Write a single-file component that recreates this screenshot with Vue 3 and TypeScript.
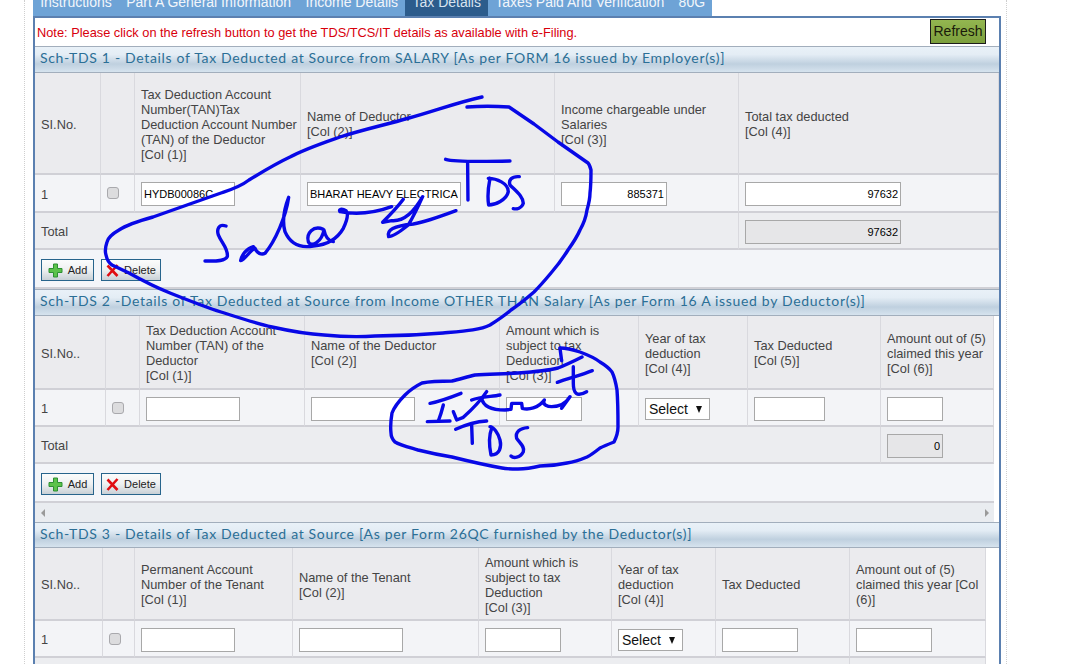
<script setup lang="ts">
interface Field { w: number; value?: string; right?: boolean; select?: boolean }
interface Section {
  title: string
  cols: number[]
  width: number
  headH: number
  rowH: number
  totalH: number
  actionH: number
  heads: string[]
  fields: Field[]
  total: string
  totalW: number
  scroll: boolean
  actions: boolean
}

const tabs = [
  { label: 'Instructions' },
  { label: 'Part A General Information' },
  { label: 'Income Details' },
  { label: 'Tax Details', active: true },
  { label: 'Taxes Paid And Verification' },
  { label: '80G' },
]

const sections: Section[] = [
  {
    title: 'Sch-TDS 1 - Details of Tax Deducted at Source from SALARY [As per FORM 16 issued by Employer(s)]',
    cols: [66, 34, 166, 254, 184, 260],
    width: 964,
    headH: 102,
    rowH: 38,
    totalH: 37,
    actionH: 39,
    heads: [
      'SI.No.',
      '',
      'Tax Deduction Account Number(TAN)Tax Deduction Account Number (TAN) of the Deductor\n[Col (1)]',
      'Name of Deductor\n[Col (2)]',
      'Income chargeable under Salaries\n[Col (3)]',
      'Total tax deducted\n[Col (4)]',
    ],
    fields: [
      { w: 94, value: 'HYDB00086C' },
      { w: 154, value: 'BHARAT HEAVY ELECTRICALS' },
      { w: 106, value: '885371', right: true },
      { w: 156, value: '97632', right: true },
    ],
    total: '97632',
    totalW: 156,
    scroll: false,
    actions: true,
  },
  {
    title: 'Sch-TDS 2 -Details of Tax Deducted at Source from Income OTHER THAN Salary [As per Form 16 A issued by Deductor(s)]',
    cols: [71, 34, 165, 195, 139, 109, 133, 113],
    width: 959,
    headH: 74,
    rowH: 37,
    totalH: 37,
    actionH: 39,
    heads: [
      'SI.No..',
      '',
      'Tax Deduction Account Number (TAN) of the Deductor\n[Col (1)]',
      'Name of the Deductor\n[Col (2)]',
      'Amount which is subject to tax Deduction\n[Col (3)]',
      'Year of tax deduction\n[Col (4)]',
      'Tax Deducted\n[Col (5)]',
      'Amount out of (5) claimed this year\n[Col (6)]',
    ],
    fields: [
      { w: 94 },
      { w: 104 },
      { w: 76 },
      { w: 65, select: true },
      { w: 71 },
      { w: 56 },
    ],
    total: '0',
    totalW: 56,
    scroll: true,
    actions: true,
  },
  {
    title: 'Sch-TDS 3 - Details of Tax Deducted at Source [As per Form 26QC furnished by the Deductor(s)]',
    cols: [68, 32, 158, 186, 133, 104, 134, 136],
    width: 951,
    headH: 73,
    rowH: 37,
    totalH: 37,
    actionH: 39,
    heads: [
      'SI.No..',
      '',
      'Permanent Account Number of the Tenant\n[Col (1)]',
      'Name of the Tenant\n[Col (2)]',
      'Amount which is subject to tax Deduction\n[Col (3)]',
      'Year of tax deduction\n[Col (4)]',
      'Tax Deducted',
      'Amount out of (5) claimed this year [Col (6)]',
    ],
    fields: [
      { w: 94 },
      { w: 104 },
      { w: 76 },
      { w: 65, select: true },
      { w: 76 },
      { w: 76 },
    ],
    total: '0',
    totalW: 76,
    scroll: false,
    actions: false,
  },
]
</script>

<template>
  <div class="page">
    <div class="rail">
      <div class="shell">
        <nav class="tabs">
          <span v-for="t in tabs" :key="t.label" class="tab" :class="{ active: t.active }">{{ t.label }}</span>
        </nav>
        <div class="frame">
          <div class="note">
            <span>Note: Please click on the refresh button to get the TDS/TCS/IT details as available with e-Filing.</span>
            <button class="refresh" type="button">Refresh</button>
          </div>

          <section v-for="s in sections" :key="s.title">
            <h2 class="sch">{{ s.title }}</h2>
            <div class="block" :style="{ width: s.width + 'px' }">
              <table class="grid" :style="{ width: s.width + 'px' }">
                <colgroup>
                  <col v-for="(c, i) in s.cols" :key="i" :style="{ width: c + 'px' }" />
                </colgroup>
                <tbody>
                  <tr class="head" :style="{ height: s.headH + 'px' }">
                    <th v-for="(h, i) in s.heads" :key="i">{{ h }}</th>
                  </tr>
                  <tr class="row" :style="{ height: s.rowH + 'px' }">
                    <td>1</td>
                    <td><input class="check" type="checkbox" /></td>
                    <td v-for="(f, i) in s.fields" :key="i">
                      <div v-if="f.select" class="sel" :style="{ width: f.w + 'px' }">
                        <select><option>Select</option></select>
                        <i class="arrow"></i>
                      </div>
                      <input
                        v-else
                        class="field"
                        :class="{ right: f.right }"
                        :style="{ width: f.w + 'px' }"
                        :value="f.value ?? ''"
                        readonly
                      />
                    </td>
                  </tr>
                  <tr class="sum" :style="{ height: s.totalH + 'px' }">
                    <td :colspan="s.cols.length - 1">Total</td>
                    <td>
                      <input class="field right off" :style="{ width: s.totalW + 'px' }" :value="s.total" readonly />
                    </td>
                  </tr>
                </tbody>
              </table>
              <div v-if="s.actions" class="actions" :style="{ height: s.actionH + 'px' }">
                <button class="act add" type="button">
                  <svg width="15" height="15" viewBox="0 0 15 15">
                    <path d="M5.500 1h4v4.500h4.500v4H9.500V14h-4V9.500H1v-4h4.500z" fill="#5cc24a" stroke="#2c8f33" />
                  </svg>
                  Add
                </button>
                <button class="act del" type="button">
                  <svg width="13" height="13" viewBox="0 0 13 13">
                    <path d="M1.500 1.500 11.500 12M11.500 1 1.500 12" stroke="#e00d12" stroke-width="2.600" fill="none" />
                  </svg>
                  Delete
                </button>
              </div>
              <div v-if="s.scroll" class="scrollbar">
                <i class="tri left"></i>
                <i class="tri right"></i>
              </div>
            </div>
          </section>
        </div>
      </div>
    </div>

    <svg class="ink" viewBox="0 0 1068 664" width="1068" height="664" fill="none">
      <g stroke="#0808e6" stroke-width="3.400" stroke-linecap="round" stroke-linejoin="round">
        <path d="M482 97 C455 103 435 111 409 118 C385 125 365 129 340 137 C320 144 305 149 290 157 C275 164 262 172 249 180 C240 187 230 190 221 193 L187 205 L153 217 C135 222 125 226 119 230 C112 234 108 238 107 242 C105 248 105 252 106 255 C107 260 109 263 112 265 L129 273 C145 282 155 287 170 293 C190 301 205 307 221 312 C240 318 255 323 272 327 C290 331 305 334 324 335 C345 337 360 337 375 336 C400 336 420 335 443 333 C465 331 480 330 490 325 C498 320 504 316 511 310 C520 304 527 298 534 292 C541 285 546 279 551 273 C558 265 563 258 568 250 C573 243 577 237 580 230 C584 223 586 217 587 210 C589 203 590 198 590 193 C591 185 591 176 591 170 C590 166 589 164 588 163 L558 142 L534 124 L509 107 C495 106 480 106 467 107" />
        <g transform="translate(200 150) scale(.3333)">
          <path vector-effect="non-scaling-stroke" d="M78 228 C55 220 50 240 55 255 C65 280 85 295 82 320 C75 335 45 333 15 333" />
          <path vector-effect="non-scaling-stroke" d="M160 290 C140 295 125 315 122 332 C135 330 150 300 165 295 C170 310 185 315 195 310 C225 275 258 200 266 142 C255 170 245 210 255 245 C270 280 300 295 340 288 C375 285 410 270 430 235 C442 210 445 190 438 182 C425 174 415 178 420 185 C470 195 520 190 575 170" />
          <path vector-effect="non-scaling-stroke" d="M370 238 C340 225 318 250 325 275 C335 295 365 275 372 240 C375 255 380 272 400 275" />
          <path vector-effect="non-scaling-stroke" d="M610 148 C590 175 565 200 548 217 L575 212 C610 215 640 190 668 140 C650 180 640 200 625 225 C600 245 580 260 566 260 C560 240 580 228 640 222 C680 215 720 200 768 182" />
          <path vector-effect="non-scaling-stroke" d="M737 28 C760 35 850 35 930 33" />
          <path vector-effect="non-scaling-stroke" d="M803 40 L804 150" />
          <path vector-effect="non-scaling-stroke" d="M870 85 C865 110 862 140 866 165 C885 165 920 150 925 125 C925 100 890 85 865 85" />
          <path vector-effect="non-scaling-stroke" d="M958 80 C935 78 925 90 930 105 C950 125 970 140 970 160 C965 175 950 178 940 176" />
        </g>
        <path d="M560 348 C568 348 574 350 580 352 C588 355 595 358 600 362 C605 365 609 368 612 372 C615 378 616 384 617 390 C618 403 618 415 618 427 C618 433 616 438 614 442 C609 444 604 446 600 448 C595 452 591 455 587 457 C580 460 574 462 567 463 C558 465 549 466 540 466 C532 468 525 469 518 469 C510 469 506 469 502 468 C485 465 468 461 452 457 C440 455 430 453 418 450 C408 447 400 445 395 442 C392 439 391 436 391 433 C390 425 391 419 392 413 C395 405 400 400 405 395 C410 390 416 386 422 383 C432 381 442 381 452 381 C460 379 467 377 475 375 C490 374 505 374 518 373 C532 372 546 371 558 368 C566 365 574 361 582 357" />
        <g transform="translate(385 340) scale(.3333)">
          <path vector-effect="non-scaling-stroke" d="M530 62 L525 25" />
          <path vector-effect="non-scaling-stroke" d="M135 190 C160 185 190 175 228 160" />
          <path vector-effect="non-scaling-stroke" d="M175 195 C170 215 165 230 160 243" />
          <path vector-effect="non-scaling-stroke" d="M127 245 L195 243" />
          <path vector-effect="non-scaling-stroke" d="M205 215 L215 240 L235 232 C265 205 285 185 305 155" />
          <path vector-effect="non-scaling-stroke" d="M260 180 C285 170 320 170 345 165" />
          <path vector-effect="non-scaling-stroke" d="M290 175 C295 200 320 210 360 210 L378 208 L380 190 L410 190 L412 205 C430 210 460 205 478 180 C470 195 490 200 500 200 C520 200 540 195 555 170 L530 205" />
          <path vector-effect="non-scaling-stroke" d="M517 127 C550 115 590 105 622 92" />
          <path vector-effect="non-scaling-stroke" d="M565 80 L565 130 C565 160 575 172 605 155" />
          <path vector-effect="non-scaling-stroke" d="M212 268 C240 255 270 245 305 243" />
          <path vector-effect="non-scaling-stroke" d="M260 255 L262 310" />
          <path vector-effect="non-scaling-stroke" d="M320 265 C310 290 315 330 318 345 C345 345 350 320 345 300 C340 280 325 260 315 260" />
          <path vector-effect="non-scaling-stroke" d="M428 263 C405 265 390 275 395 295 C405 310 420 320 415 335 C405 355 385 355 378 348" />
        </g>
      </g>
    </svg>
  </div>
</template>

<style>
html, body { margin: 0; background: #fff; }
</style>

<style scoped>
.page {
  position: relative;
  width: 1068px;
  height: 664px;
  overflow: hidden;
  background: #fff;
  font-family: "Liberation Sans", Arial, sans-serif;
  font-size: 12.800px;
  color: #444;
}
.rail {
  box-sizing: border-box;
  width: 983px;
  height: 664px;
  margin-left: 24px;
  padding-left: 8px;
  border-left: 1px dotted #cfcfcf;
  border-right: 1px dotted #cfcfcf;
}
.shell { width: 968px; }
.tabs {
  display: flex;
  align-items: flex-end;
  box-sizing: border-box;
  width: 679px;
  height: 16px;
  overflow: hidden;
  background: #6ea3d6;
}
.tab {
  flex: none;
  padding: 0 7.200px 6px;
  font-size: 14px;
  line-height: 16px;
  color: #f2f6fb;
}
.tab.active {
  background: #2c5c8c;
  color: #d8e4f0;
}
.frame {
  border: 2px solid #5b80b0;
  border-bottom: none;
  background: #fff;
}
.note {
  display: flex;
  align-items: center;
  justify-content: space-between;
  box-sizing: border-box;
  height: 28px;
  padding: 0 13px 0 2px;
  color: #d8000c;
}
.refresh {
  box-sizing: border-box;
  width: 56px;
  height: 25px;
  margin-top: -2px;
  padding: 0;
  border: 1px solid #1c1c1c;
  background: linear-gradient(#93b650, #7c9f3c);
  font: 14px "Liberation Sans", Arial, sans-serif;
  color: #1a1a0a;
}
.sch {
  box-sizing: border-box;
  height: 27px;
  margin: 0;
  padding: 0 5px;
  border-top: 1px solid #a2aebc;
  border-bottom: 1px solid #a2aebc;
  background: linear-gradient(#e9f1f8 0%, #e4edf5 30%, #bfd0df 68%, #d6e3ee 100%);
  font-family: Lato, "Open Sans", sans-serif;
  font-size: 14px;
  font-weight: 400;
  line-height: 21px;
  letter-spacing: .67px;
  color: #2b6f96;
  white-space: nowrap;
}
section:last-child .sch { height: 26px; }
.grid {
  table-layout: fixed;
  border-collapse: separate;
  border-spacing: 0;
}
.grid th, .grid td {
  box-sizing: border-box;
  padding: 2px 6px 0;
  border-right: 1px solid #d9d9de;
  border-bottom: 2px solid #d0d0d6;
  font-size: 12.800px;
  line-height: 15px;
  color: #444;
  text-align: left;
  vertical-align: middle;
}
.grid th {
  padding-right: 3px;
  background: #ebebee;
  font-weight: 400;
  white-space: pre-line;
}
.row td { background: #f3f4f7; }
.sum td { background: #ecedf0; }
.check {
  appearance: none;
  display: block;
  box-sizing: border-box;
  width: 12px;
  height: 12px;
  margin: -2px 0 0;
  border: 1px solid #a9a9ad;
  border-radius: 3px;
  background: #dcdcde;
}
.field {
  display: block;
  box-sizing: border-box;
  height: 24px;
  padding: 0 2px;
  border: 1px solid #a8a8a8;
  border-radius: 0;
  background: #fff;
  font: 11px "Liberation Sans", Arial, sans-serif;
  color: #000;
  outline: none;
}
.field.right { text-align: right; }
.field.off { background: #e6e6e8; }
.sel {
  position: relative;
  height: 22px;
}
.sel select {
  appearance: none;
  box-sizing: border-box;
  width: 100%;
  height: 22px;
  padding: 0 0 0 3px;
  border: 1px solid #a8a8a8;
  border-radius: 0;
  background: #fff;
  font: 14px "Liberation Sans", Arial, sans-serif;
  color: #111;
}
.arrow {
  position: absolute;
  top: 8px;
  right: 8px;
  width: 0;
  height: 0;
  border-left: 3.500px solid transparent;
  border-right: 3.500px solid transparent;
  border-top: 7px solid #111;
}
.actions {
  display: flex;
  gap: 7px;
  box-sizing: border-box;
  padding: 9px 6px 0;
  border-bottom: 2px solid #d0d0d6;
  background: #f3f5f9;
}
.act {
  display: flex;
  align-items: center;
  justify-content: center;
  gap: 5px;
  box-sizing: border-box;
  height: 22px;
  padding: 0;
  border: 1px solid #27648c;
  background: linear-gradient(#fbfcfc 0%, #eef0f1 50%, #c8d0d6 100%);
  font: 11px "Liberation Sans", Arial, sans-serif;
  color: #222;
}
.add { width: 53px; }
.del { width: 60px; }
.scrollbar {
  display: flex;
  align-items: center;
  justify-content: space-between;
  box-sizing: border-box;
  height: 19px;
  padding: 0 5px 0 6px;
  background: #e9ecf0;
}
.tri {
  width: 0;
  height: 0;
  border-top: 4px solid transparent;
  border-bottom: 4px solid transparent;
}
.tri.left { border-right: 4px solid #9a9a9a; }
.tri.right { border-left: 4px solid #9a9a9a; }
.ink {
  position: absolute;
  inset: 0;
  pointer-events: none;
}
</style>
